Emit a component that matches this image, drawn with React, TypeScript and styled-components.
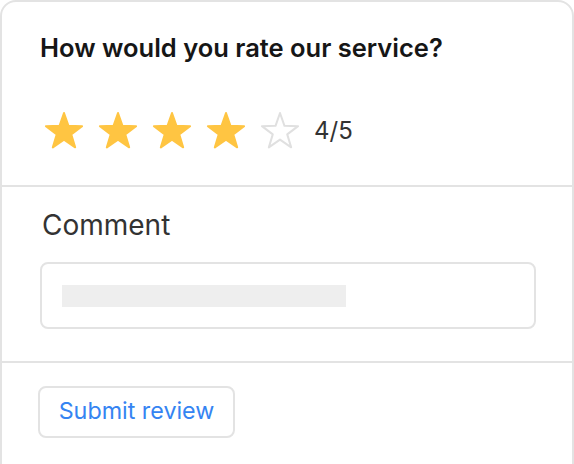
import { createGlobalStyle, styled } from 'styled-components';

const GlobalStyle = createGlobalStyle`
  html, body {
    margin: 0;
    padding: 0;
    background: #ffffff;
    overflow: hidden;
  }
  * {
    box-sizing: border-box;
  }
`;

const STAR_COLOR = '#ffc542';
const LINE_COLOR = '#e3e3e3';

const starPoints = (() => {
  const cx = 24;
  const cy = 26;
  const outer = 19;
  const inner = 7.6;
  const pts: string[] = [];
  for (let i = 0; i < 10; i++) {
    const r = i % 2 === 0 ? outer : inner;
    const a = (Math.PI / 5) * i - Math.PI / 2;
    pts.push(`${(cx + r * Math.cos(a)).toFixed(2)},${(cy + r * Math.sin(a)).toFixed(2)}`);
  }
  return pts.join(' ');
})();

const Star = ({ filled }: { filled: boolean }) => (
  <StarIcon width="48" height="48" viewBox="0 0 48 48">
    <polygon
      points={starPoints}
      fill={filled ? STAR_COLOR : 'none'}
      stroke={filled ? STAR_COLOR : '#e0e0e0'}
      strokeWidth="2"
      strokeLinejoin="round"
    />
  </StarIcon>
);

export default function App() {
  const rating = 4;
  const total = 5;

  return (
    <>
      <GlobalStyle />
      <Card>
        <RatingSection>
          <Title>How would you rate our service?</Title>
          <StarsRow>
            {Array.from({ length: total }, (_, i) => (
              <Star key={i} filled={i < rating} />
            ))}
            <Score>
              {rating}/{total}
            </Score>
          </StarsRow>
        </RatingSection>
        <CommentSection>
          <Label>Comment</Label>
          <InputBox>
            <Placeholder />
          </InputBox>
        </CommentSection>
        <FooterSection>
          <SubmitButton>Submit review</SubmitButton>
        </FooterSection>
      </Card>
    </>
  );
}

const Card = styled.div`
  width: 574px;
  border: 2px solid ${LINE_COLOR};
  border-radius: 16px;
  background: #ffffff;
  font-family: Inter, 'Noto Sans', sans-serif;
`;

const RatingSection = styled.section`
  display: flex;
  flex-direction: column;
  gap: 42px;
  padding: 30px 38px 31px;
  border-bottom: 2px solid ${LINE_COLOR};
`;

const Title = styled.h2`
  margin: 0;
  font-size: 25.5px;
  line-height: 32px;
  font-weight: 600;
  color: #161616;
`;

const StarsRow = styled.div`
  display: flex;
  align-items: center;
  gap: 6px;
  height: 48px;
`;

const StarIcon = styled.svg`
  display: block;
  flex: none;
`;

const Score = styled.span`
  margin-left: 4px;
  padding-top: 1px;
  font-size: 24px;
  line-height: 47px;
  color: #333333;
`;

const CommentSection = styled.section`
  display: flex;
  flex-direction: column;
  gap: 21px;
  padding: 22px 36px 32px 38px;
  border-bottom: 2px solid ${LINE_COLOR};
`;

const Label = styled.label`
  padding-left: 2px;
  font-size: 28px;
  line-height: 32px;
  color: #333333;
`;

const InputBox = styled.div`
  height: 67px;
  display: flex;
  align-items: center;
  padding: 0 20px;
  border: 2px solid ${LINE_COLOR};
  border-radius: 8px;
`;

const Placeholder = styled.div`
  width: 284px;
  height: 22px;
  background: #eeeeee;
`;

const FooterSection = styled.section`
  padding: 23px 36px 48px;
`;

const SubmitButton = styled.button`
  display: block;
  width: 197px;
  height: 52px;
  padding: 0 0 3px;
  border: 2px solid ${LINE_COLOR};
  border-radius: 8px;
  background: #ffffff;
  font-family: inherit;
  font-size: 23.3px;
  font-weight: 400;
  color: #3584f2;
  cursor: pointer;
`;
